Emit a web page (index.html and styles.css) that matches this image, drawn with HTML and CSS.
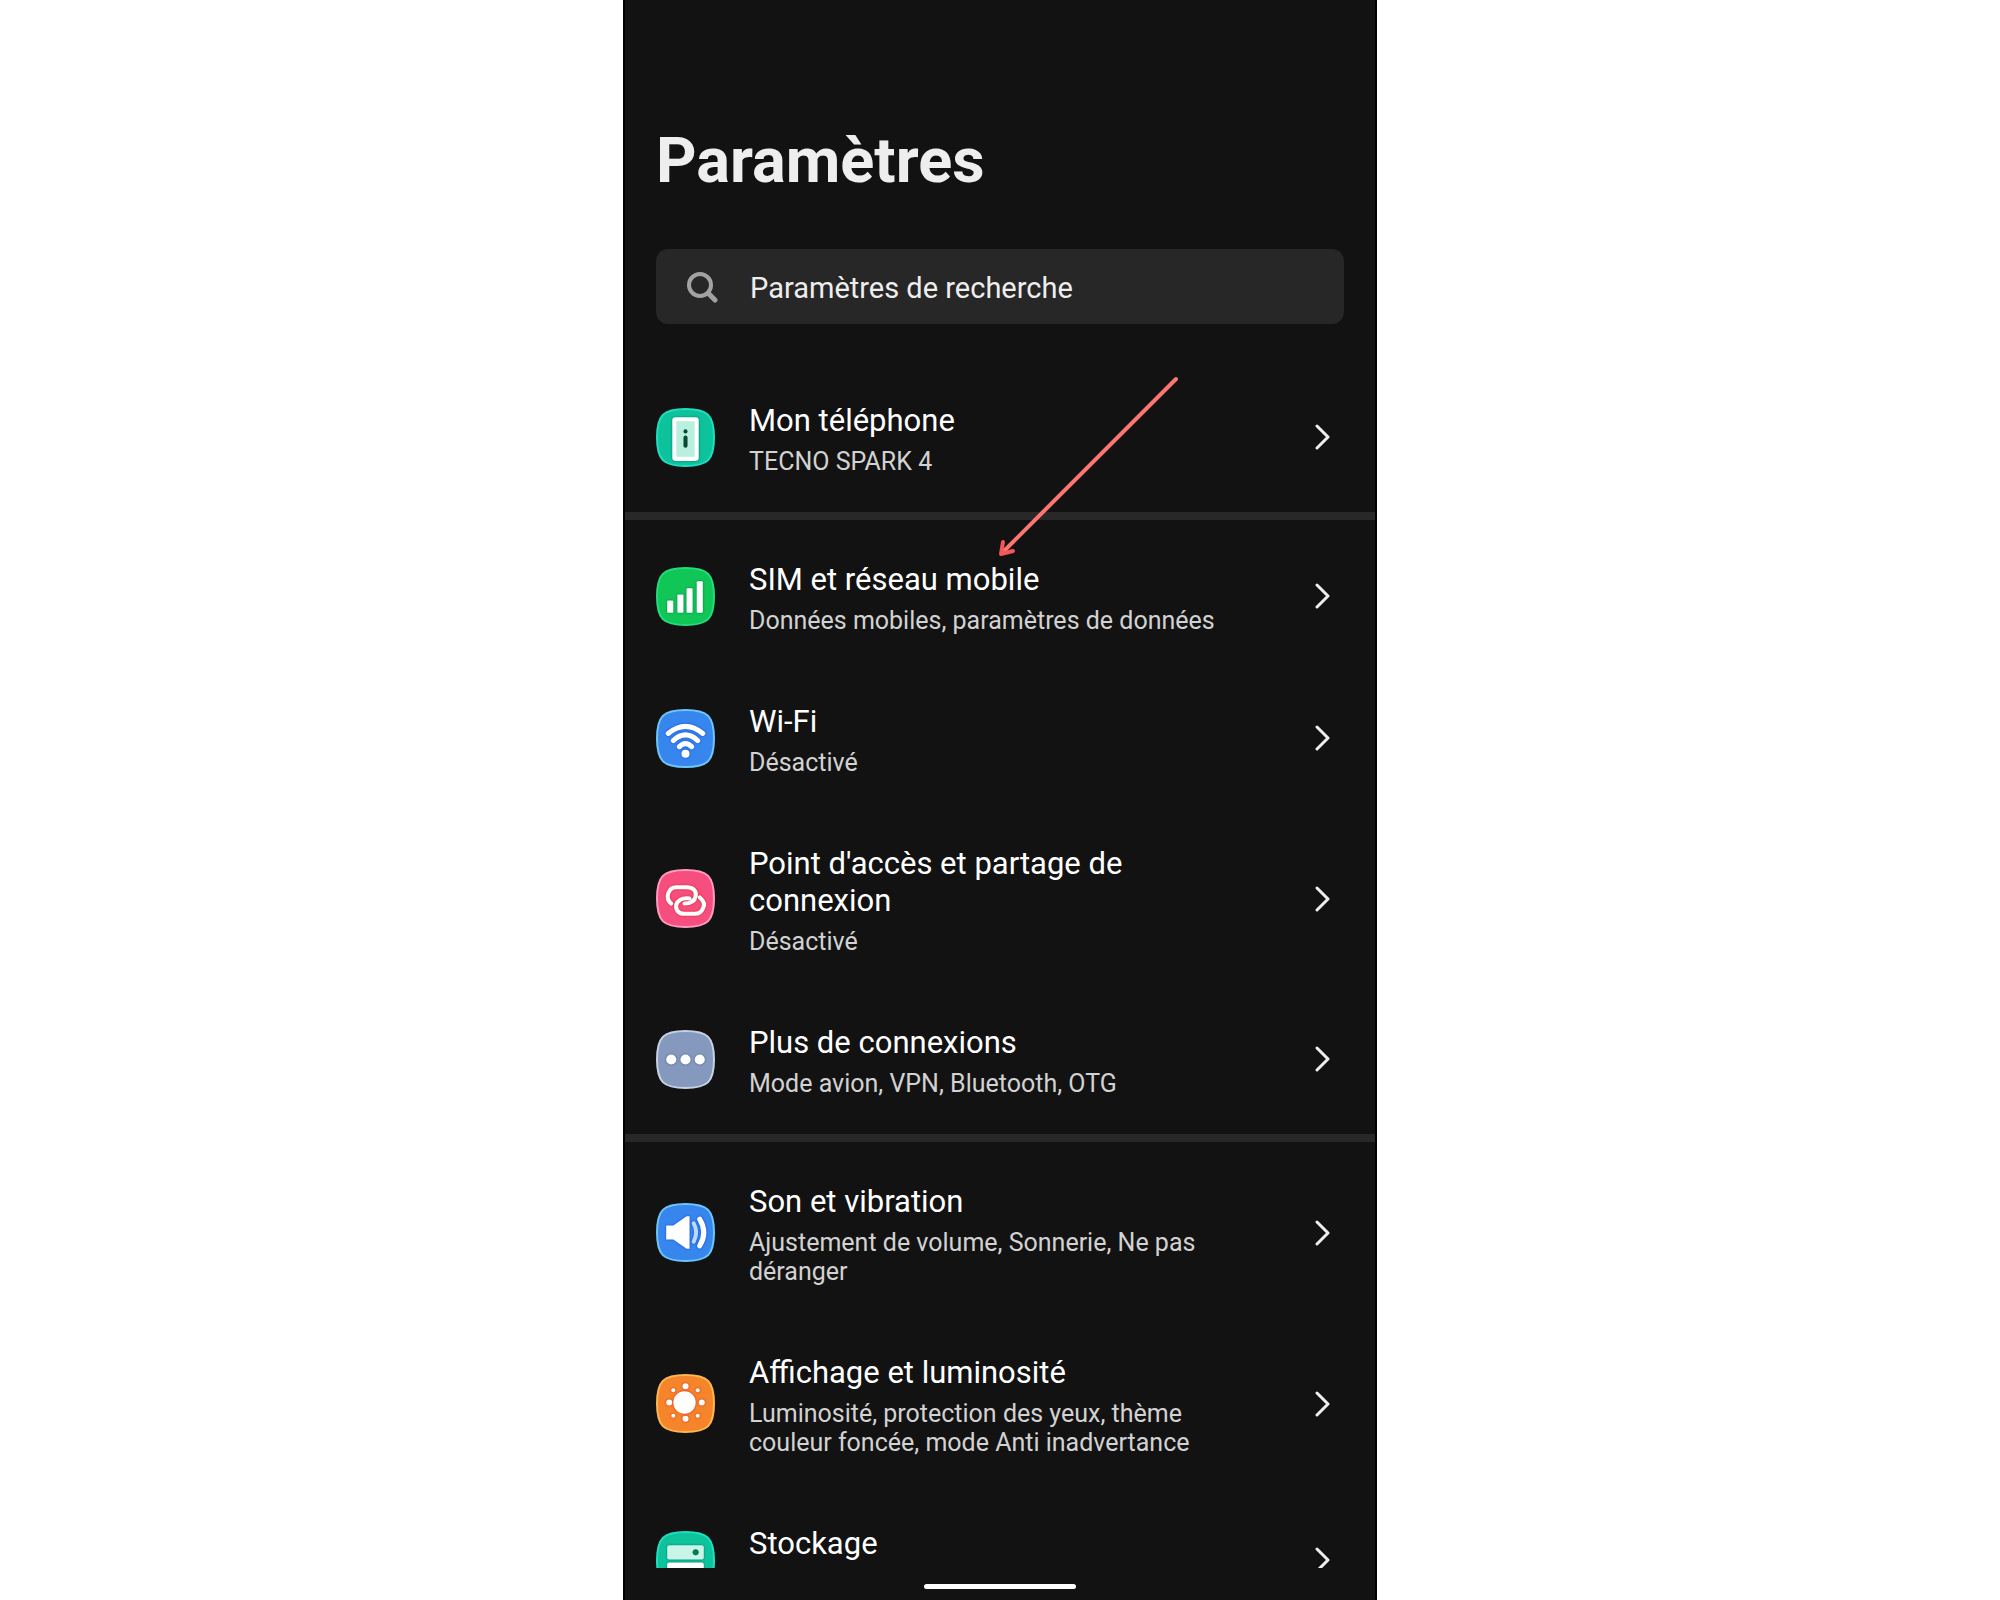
FILE: index.html
```html
<!DOCTYPE html>
<html lang="fr">
<head>
<meta charset="utf-8">
<meta name="viewport" content="width=device-width, initial-scale=1">
<title>Paramètres</title>
<link rel="stylesheet" href="styles.css">
</head>
<body>
<svg class="defs" aria-hidden="true">
  <symbol id="tile" viewBox="0 0 58 58"><path d="M29 1C51 1 57 7 57 29S51 57 29 57 1 51 1 29 7 1 29 1Z"/></symbol>
  <symbol id="chevron" viewBox="0 0 16 26"><path d="M2 2 13 13 2 24" fill="none" stroke="currentColor" stroke-width="3" stroke-linecap="round" stroke-linejoin="round"/></symbol>
</svg>
<main class="phone">
  <header class="header">
    <h1 class="title">Paramètres</h1>
    <label class="search">
      <svg class="search-icon" viewBox="0 0 32 32" aria-hidden="true"><circle cx="14" cy="14" r="11" fill="none" stroke="currentColor" stroke-width="4"/><path d="M23 23l6 6" stroke="currentColor" stroke-width="5" stroke-linecap="round"/></svg>
      <input class="search-input" type="search" placeholder="Paramètres de recherche" aria-label="Paramètres de recherche">
    </label>
  </header>

  <nav class="list">
    <section class="group">
      <a class="row" href="#telephone">
        <svg class="icon teal" viewBox="0 0 58 58" aria-hidden="true"><use class="tile" href="#tile"/><g class="glyph"><rect x="16" y="9" width="26" height="43" rx="3" fill="#fff"/><rect x="20" y="13" width="18" height="35" fill="#b8efdf"/><circle cx="29" cy="23" r="2" fill="#064b2b"/><path d="M29 29v8" stroke="#064b2b" stroke-width="4" stroke-linecap="round"/></g></svg>
        <span class="text"><span class="name">Mon téléphone</span><span class="detail">TECNO SPARK 4</span></span>
        <svg class="chevron" aria-hidden="true"><use href="#chevron"/></svg>
      </a>
    </section>

    <section class="group">
      <a class="row" href="#sim">
        <svg class="icon green" viewBox="0 0 58 58" aria-hidden="true"><use class="tile" href="#tile"/><g class="glyph" fill="#fff"><rect x="11" y="33" width="6" height="12" rx="1"/><rect x="21" y="27" width="6" height="18" rx="1"/><rect x="30" y="21" width="6" height="24" rx="1"/><rect x="40" y="14" width="6" height="31" rx="1"/></g></svg>
        <span class="text"><span class="name">SIM et réseau mobile</span><span class="detail">Données mobiles, paramètres de données</span></span>
        <svg class="chevron" aria-hidden="true"><use href="#chevron"/></svg>
      </a>
      <a class="row" href="#wifi">
        <svg class="icon blue" viewBox="0 0 58 58" aria-hidden="true"><use class="tile" href="#tile"/><g class="glyph" fill="none" stroke="#fff" stroke-width="5" stroke-linecap="round"><path d="M12 24Q29 10 46 24M17 31Q29 20 41 31M23 37Q29 31 35 37"/><circle cx="29" cy="44" r="4" fill="#fff" stroke="none"/></g></svg>
        <span class="text"><span class="name">Wi-Fi</span><span class="detail">Désactivé</span></span>
        <svg class="chevron" aria-hidden="true"><use href="#chevron"/></svg>
      </a>
      <a class="row" href="#partage">
        <svg class="icon pink" viewBox="0 0 58 58" aria-hidden="true"><use class="tile" href="#tile"/><g class="glyph" fill="none" stroke="#fff" stroke-width="4" stroke-linecap="round"><path d="M15 34C11 31 11 27 12 24Q14 18 20 18H30C37 18 40 22 39 27 38 32 34 34 28 34"/><path d="M43 28C48 32 48 36 46 39Q44 44 38 44H28C21 44 19 39 20 35 22 30 26 28 33 29"/></g></svg>
        <span class="text"><span class="name">Point d'accès et partage de connexion</span><span class="detail">Désactivé</span></span>
        <svg class="chevron" aria-hidden="true"><use href="#chevron"/></svg>
      </a>
      <a class="row" href="#connexions">
        <svg class="icon slate" viewBox="0 0 58 58" aria-hidden="true"><use class="tile" href="#tile"/><g class="glyph" fill="#fff"><circle cx="15" cy="29" r="5"/><circle cx="29" cy="29" r="5"/><circle cx="43" cy="29" r="5"/></g></svg>
        <span class="text"><span class="name">Plus de connexions</span><span class="detail">Mode avion, VPN, Bluetooth, OTG</span></span>
        <svg class="chevron" aria-hidden="true"><use href="#chevron"/></svg>
      </a>
    </section>

    <section class="group">
      <a class="row" href="#son">
        <svg class="icon blue" viewBox="0 0 58 58" aria-hidden="true"><use class="tile" href="#tile"/><g class="glyph" stroke-linecap="round"><path d="M10 22H17L30 13H33V45H30L17 36H10Z" fill="#fff"/><path d="M37 20Q42 29 37 38" fill="none" stroke="#b5dcff" stroke-width="4"/><path d="M43 16Q51 29 43 42" fill="none" stroke="#fff" stroke-width="5"/></g></svg>
        <span class="text"><span class="name">Son et vibration</span><span class="detail">Ajustement de volume, Sonnerie, Ne pas déranger</span></span>
        <svg class="chevron" aria-hidden="true"><use href="#chevron"/></svg>
      </a>
      <a class="row" href="#affichage">
        <svg class="icon orange" viewBox="0 0 58 58" aria-hidden="true"><use class="tile" href="#tile"/><g class="glyph" fill="#fff"><circle cx="28" cy="28" r="11"/><circle cx="29" cy="12" r="3"/><circle cx="29" cy="44" r="3"/><circle cx="13" cy="28" r="3"/><circle cx="45" cy="28" r="3"/><circle cx="17" cy="16" r="2"/><circle cx="41" cy="16" r="2"/><circle cx="17" cy="41" r="2"/><circle cx="41" cy="41" r="2"/></g></svg>
        <span class="text"><span class="name">Affichage et luminosité</span><span class="detail">Luminosité, protection des yeux, thème couleur foncée, mode Anti inadvertance</span></span>
        <svg class="chevron" aria-hidden="true"><use href="#chevron"/></svg>
      </a>
      <a class="row" href="#stockage">
        <svg class="icon teal" viewBox="0 0 58 58" aria-hidden="true"><use class="tile" href="#tile"/><g class="glyph"><rect x="11" y="14" width="36" height="14" rx="2" fill="#c9f5e8"/><rect x="11" y="31" width="36" height="14" rx="2" fill="#fff"/></g><circle class="dot" cx="39" cy="21" r="3"/></svg>
        <span class="text"><span class="name">Stockage</span></span>
        <svg class="chevron" aria-hidden="true"><use href="#chevron"/></svg>
      </a>
    </section>
  </nav>

  <footer class="home"><span class="home-bar"></span></footer>

  <svg class="pointer" viewBox="0 0 184 184" fill="none" stroke="#fb7672" stroke-linecap="round" stroke-linejoin="round" aria-hidden="true"><path d="M179 5 6 178" stroke-width="4"/><path d="M6 168 4 180 16 177" stroke="#f4565a" stroke-width="4"/></svg>
</main>
</body>
</html>
```

FILE: styles.css
```css
* {
  box-sizing: border-box;
}

body {
  margin: 0;
  background: #fff;
  font-family: Roboto, "Liberation Sans", sans-serif;
}

.defs {
  display: none;
}

.phone {
  position: relative;
  display: flex;
  flex-direction: column;
  width: 100%;
  max-width: 754px;
  height: 100vh;
  margin: 0 auto;
  background: #121212;
  border: solid #000;
  border-width: 0 2px;
  color: #fff;
}

.header {
  padding: 121px 31px 42px;
}

.title {
  margin: 0 0 48px;
  color: #eee;
  font-size: 63px;
  font-weight: 700;
  line-height: 80px;
}

.search {
  display: flex;
  align-items: center;
  gap: 32px;
  height: 75px;
  padding: 0 30px;
  border-radius: 12px;
  background: #272727;
}

.search-icon {
  width: 32px;
  height: 32px;
  color: #a2a2a2;
}

.search-input {
  flex: 1;
  min-width: 0;
  padding: 2px 0 0;
  border: 0;
  outline: 0;
  background: none;
  color: #eee;
  font: 400 29px/36px Roboto, "Liberation Sans", sans-serif;
}

.search-input::placeholder {
  color: #eee;
  opacity: 1;
}

.list {
  flex: 1;
  min-height: 0;
  overflow: hidden;
}

.group + .group {
  margin-top: 4px;
  padding-top: 5px;
  border-top: 8px solid #282828;
}

.row {
  display: flex;
  align-items: center;
  padding: 32px 44px 32px 31px;
  color: inherit;
  text-decoration: none;
}

.icon {
  flex: none;
  width: 59px;
  height: 59px;
  margin-right: 34px;
}

.tile {
  stroke-width: 2px;
}

.teal { fill: #0cc39c; }
.teal .tile { stroke: #1fdfc2; }
.green { fill: #10c657; }
.green .tile { stroke: #22dd7e; }
.blue { fill: #3686ee; }
.blue .tile { stroke: #6cc6f8; }
.pink { fill: #f64f7f; }
.pink .tile { stroke: #ff9cbb; }
.slate { fill: #8499bd; }
.slate .tile { stroke: #c6d1e4; }
.orange { fill: #f5842a; }
.orange .tile { stroke: #fcb850; }

.dot {
  fill: #067a50;
}

.glyph {
  filter: drop-shadow(0 0 1px rgba(0, 40, 60, 0.5));
}

.blue .glyph {
  filter: drop-shadow(0 0 1px #1440d8);
}

.pink .glyph,
.orange .glyph {
  filter: drop-shadow(0 0 1px #e02020);
}

.text {
  display: flex;
  flex: 1;
  flex-direction: column;
  gap: 8px;
  min-height: 78px;
  padding-top: 4px;
}

.name {
  font-size: 31px;
  line-height: 37px;
}

.detail {
  color: #d2d2d2;
  font-size: 25px;
  line-height: 29px;
}

.chevron {
  flex: none;
  width: 16px;
  height: 26px;
  margin-left: 65px;
  color: #eee;
}

.home {
  display: flex;
  align-items: center;
  justify-content: center;
  height: 32px;
  padding-top: 4px;
}

.home-bar {
  width: 152px;
  height: 5px;
  border-radius: 3px;
  background: #fff;
}

.pointer {
  position: absolute;
  top: 374px;
  left: 372px;
  width: 184px;
  height: 184px;
  pointer-events: none;
}
```
